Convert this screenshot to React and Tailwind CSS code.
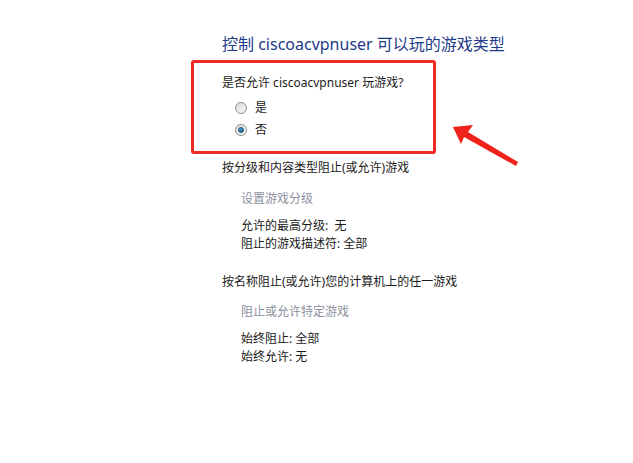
import React from "react";

const font = { fontFamily: '"Noto Sans", "Noto Sans CJK SC", sans-serif' };

function Radio({ checked }) {
  return (
    <span className="w-[12px] h-[12px] rounded-full border border-[#8e8f8f] bg-gradient-to-br from-[#dcdcdc] to-[#f7f7f7] flex items-center justify-center">
      {checked && <span className="w-[6px] h-[6px] rounded-full bg-gradient-to-br from-[#5fb3e6] to-[#1a5d93] border border-[#1b4f7a]" />}
    </span>
  );
}

export default function App() {
  return (
    <div className="relative w-[633px] h-[463px] bg-white overflow-hidden text-[12px] text-[#1a1a1a]" style={font}>
      <div className="pl-[191px] pt-[32px] flex flex-col items-start">
        {/* title */}
        <h1 className="ml-[31px] text-[16px] leading-[24px] text-[#1e3a8a] font-normal">控制 ciscoacvpnuser 可以玩的游戏类型</h1>

        {/* highlighted choice */}
        <div className="mt-[4px] w-[245px] border-[3px] border-[#ee2a24] rounded-[3px] pl-[28px] pt-[11px] pb-[10px]">
          <p className="leading-[18px]">是否允许 ciscoacvpnuser 玩游戏?</p>
          <div className="mt-[5px] pl-[13px] flex flex-col">
            <label className="h-[22px] flex items-center gap-[8px]">
              <Radio />
              <span>是</span>
            </label>
            <label className="h-[22px] flex items-center gap-[8px]">
              <Radio checked />
              <span>否</span>
            </label>
          </div>
        </div>

        <div className="ml-[31px] flex flex-col leading-[18px]">
          <p className="mt-[5px]">按分级和内容类型阻止(或允许)游戏</p>
          <p className="mt-[13px] ml-[19px] text-[#8b90a0]">设置游戏分级</p>
          <div className="mt-[9px] ml-[19px]">
            <p>允许的最高分级:&nbsp; 无</p>
            <p>阻止的游戏描述符: 全部</p>
          </div>

          <p className="mt-[20px]">按名称阻止(或允许)您的计算机上的任一游戏</p>
          <p className="mt-[12px] ml-[19px] text-[#8b90a0]">阻止或允许特定游戏</p>
          <div className="mt-[9px] ml-[19px]">
            <p>始终阻止: 全部</p>
            <p>始终允许: 无</p>
          </div>
        </div>
      </div>

      {/* red annotation arrow */}
      <svg className="absolute left-0 top-0" width="633" height="463" viewBox="0 0 633 463">
        <polygon points="453,127 473,125 468,132 518,162 516,166 464,137 461,144" fill="#f0231b" />
      </svg>
    </div>
  );
}
